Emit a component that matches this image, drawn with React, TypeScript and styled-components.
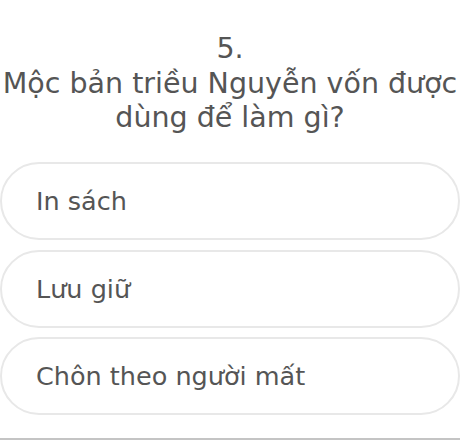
import React from "react";
import styled, { createGlobalStyle } from "styled-components";

const Global = createGlobalStyle`
  html, body { margin: 0; padding: 0; background: #ffffff; }
  body { font-family: "DejaVu Sans", "Noto Sans", sans-serif; color: #555555; }
`;

const Page = styled.div`
  width: 460px;
  height: 440px;
  overflow: hidden;
  display: flex;
  flex-direction: column;
  position: relative;
`;

const Question = styled.div`
  padding-top: 32px;
  text-align: center;
  font-size: 28.5px;
  line-height: 34.5px;
  color: #555555;
  white-space: nowrap;
`;

const Options = styled.div`
  margin-top: 26.5px;
  display: flex;
  flex-direction: column;
  gap: 9.5px;
`;

const Option = styled.div`
  box-sizing: border-box;
  height: 78px;
  width: 460px;
  border: 2px solid #e8e8e8;
  border-radius: 39px;
  display: flex;
  align-items: center;
  padding-left: 34px;
  font-size: 25.5px;
  color: #555555;
`;

const BottomRule = styled.div`
  margin-top: auto;
  height: 2px;
  background: #c4c4c4;
`;

export default function App() {
  return (
    <Page>
      <Global />
      <Question>
        5.
        <br />
        Mộc bản triều Nguyễn vốn được
        <br />
        dùng để làm gì?
      </Question>
      <Options>
        <Option>In sách</Option>
        <Option>Lưu giữ</Option>
        <Option>Chôn theo người mất</Option>
      </Options>
      <BottomRule />
    </Page>
  );
}
